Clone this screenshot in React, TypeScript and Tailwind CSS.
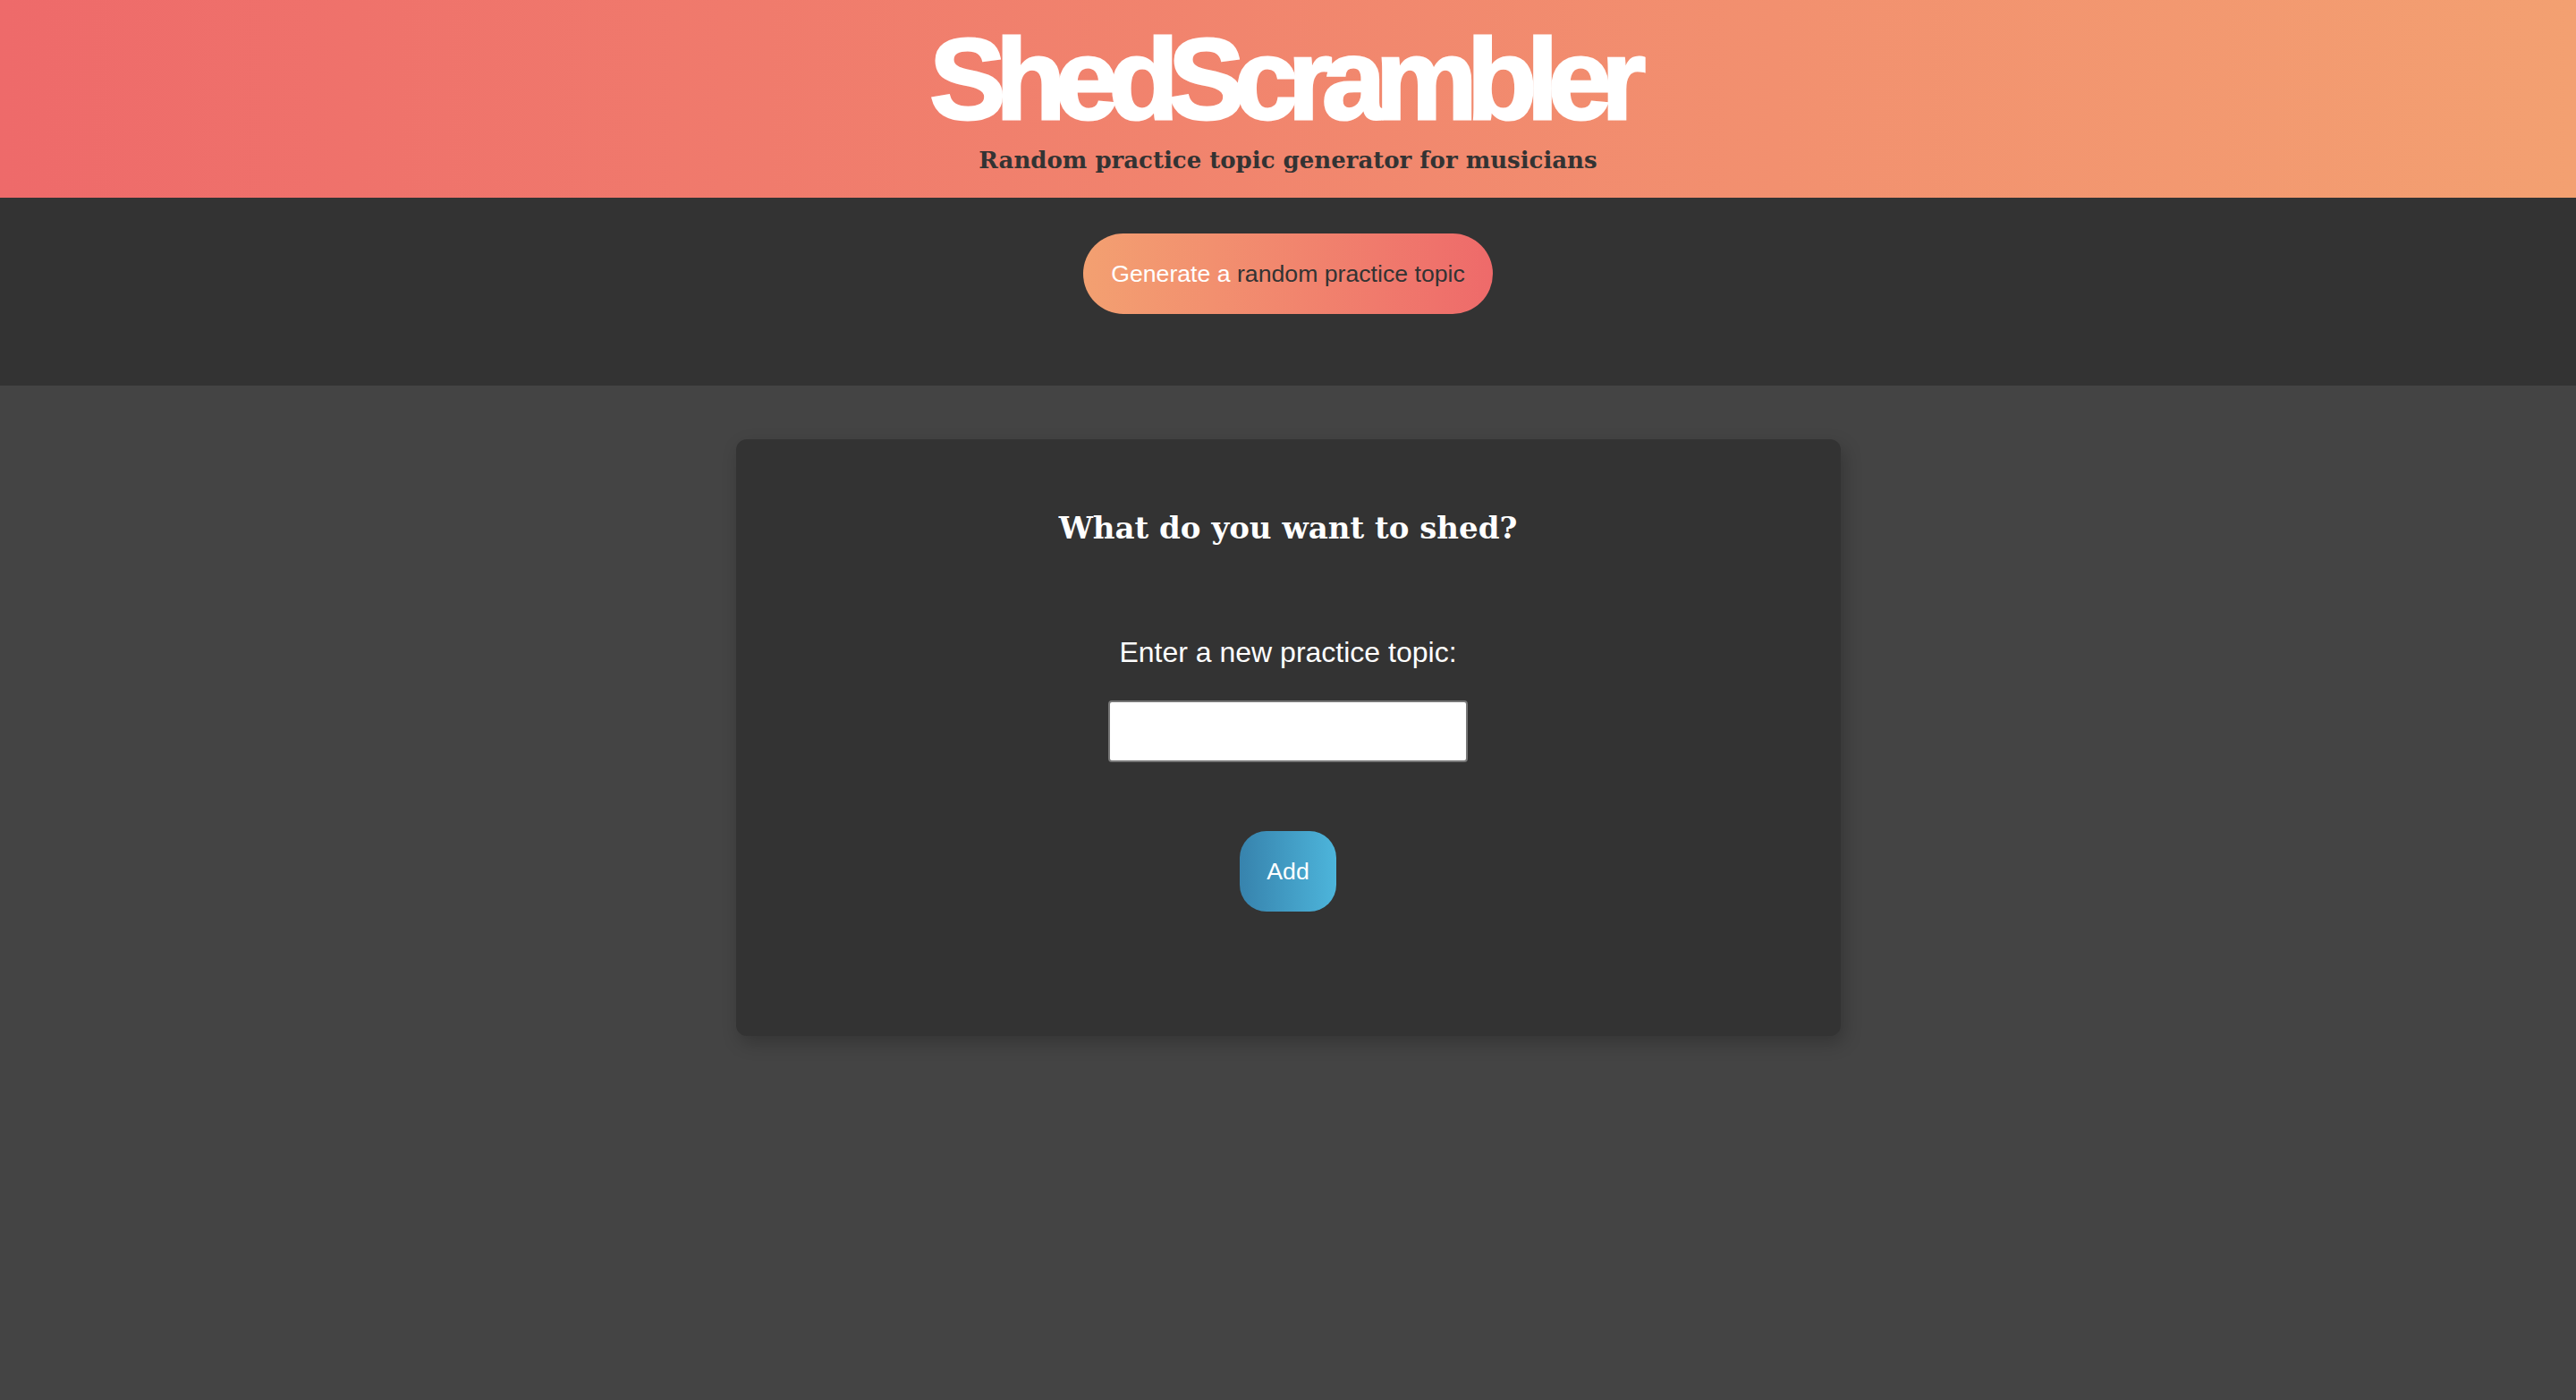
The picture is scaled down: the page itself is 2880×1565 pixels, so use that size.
import { useState } from "react";

function Header() {
  return (
    <header className="h-[221px] flex flex-col items-center bg-linear-to-r from-[#ee6a6a] to-[#f3a071]">
      <h1 className="pt-[25px] pr-[12px] text-[128px] leading-none font-bold text-white tracking-[-0.09em] [-webkit-text-stroke:3px_white] font-['Liberation_Sans',Arial,sans-serif]">
        ShedScrambler
      </h1>
      <p className="mt-[13px] text-[26px] leading-none font-bold text-[#333333] font-['DejaVu_Serif',Georgia,serif]">
        Random practice topic generator for musicians
      </p>
    </header>
  );
}

function GenerateBar() {
  return (
    <div className="bg-[#333333] flex justify-center pt-[40px] pb-[80px]">
      <button className="h-[90px] px-[31px] rounded-full bg-linear-to-r from-[#f3a071] to-[#ee6a6a] text-[26.67px] font-['Liberation_Sans',Arial,sans-serif]">
        <span className="text-white">Generate a </span>
        <span className="text-[#333333]">random practice topic</span>
      </button>
    </div>
  );
}

function TopicCard() {
  const [topic, setTopic] = useState("");
  return (
    <div className="mt-[60px] w-[1235px] flex flex-col items-center bg-[#333333] rounded-[12px] shadow-[4px_8px_20px_rgba(0,0,0,0.22)] pt-[82px] pb-[139px]">
      <h2 className="text-[34px] leading-none font-bold text-white font-['DejaVu_Serif',Georgia,serif]">
        What do you want to shed?
      </h2>
      <label className="mt-[106px] text-[32px] leading-none text-white font-['Liberation_Sans',Arial,sans-serif]">
        Enter a new practice topic:
      </label>
      <input
        value={topic}
        onChange={(e) => setTopic(e.target.value)}
        className="mt-[38px] w-[402px] h-[69px] bg-white border-2 border-[#767676] rounded-[4px] px-2 text-[26px] text-black outline-none"
      />
      <button className="mt-[77px] w-[108px] h-[90px] rounded-[30px] bg-linear-to-r from-[#3783ad] to-[#4db5db] text-white text-[26.67px] font-['Liberation_Sans',Arial,sans-serif]">
        Add
      </button>
    </div>
  );
}

export default function App() {
  return (
    <div className="min-h-screen flex flex-col bg-[#444444]">
      <Header />
      <GenerateBar />
      <main className="flex justify-center">
        <TopicCard />
      </main>
    </div>
  );
}
